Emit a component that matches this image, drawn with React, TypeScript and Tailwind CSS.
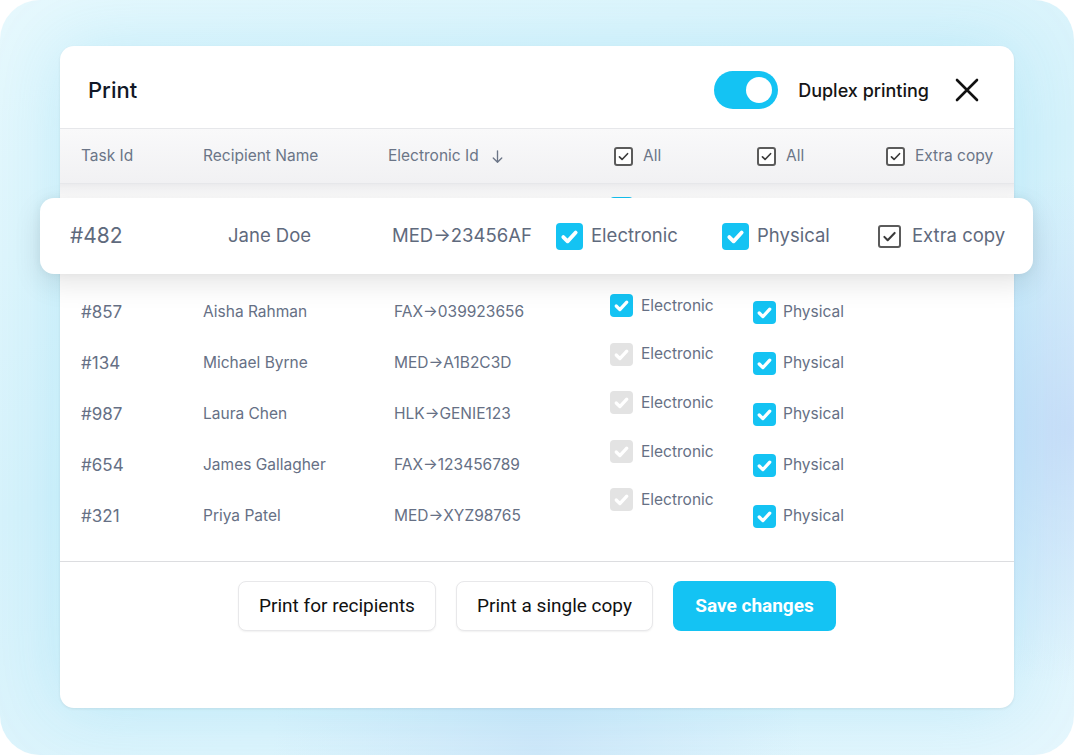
import React from "react";

type Row = { id: string; name: string; eid: string; electronic: "on" | "off" };

const rows: Row[] = [
  { id: "#219", name: "Tom Walsh", eid: "MED→77812BC", electronic: "on" },
  { id: "#482", name: "Jane Doe", eid: "MED→23456AF", electronic: "on" },
  { id: "#857", name: "Aisha Rahman", eid: "FAX→039923656", electronic: "on" },
  { id: "#134", name: "Michael Byrne", eid: "MED→A1B2C3D", electronic: "off" },
  { id: "#987", name: "Laura Chen", eid: "HLK→GENIE123", electronic: "off" },
  { id: "#654", name: "James Gallagher", eid: "FAX→123456789", electronic: "off" },
  { id: "#321", name: "Priya Patel", eid: "MED→XYZ98765", electronic: "off" },
];

const Check = ({ stroke, width = 3.4 }: { stroke: string; width?: number }) => (
  <svg viewBox="0 0 24 24" className="h-full w-full" fill="none">
    <path d="M6.5 12.5l3.8 3.8L17.5 8.5" stroke={stroke} strokeWidth={width} strokeLinecap="round" strokeLinejoin="round" />
  </svg>
);

const FilledBox = ({ size = "h-[23px] w-[23px]" }: { size?: string }) => (
  <span className={`${size} flex shrink-0 items-center justify-center rounded-[4px] bg-[#14c3f3]`}>
    <Check stroke="#ffffff" />
  </span>
);

const DisabledBox = () => (
  <span className="flex h-[23px] w-[23px] shrink-0 items-center justify-center rounded-[4px] bg-[#e3e3e3]">
    <Check stroke="#ffffff" />
  </span>
);

const OutlineBox = ({ size = "h-[19px] w-[19px]" }: { size?: string }) => (
  <span className={`${size} flex shrink-0 items-center justify-center rounded-[3px] border-2 border-[#5b5b5b] bg-white`}>
    <svg viewBox="0 0 24 24" className="h-full w-full" fill="none">
      <path d="M5.5 12.5l4.2 4.2L18.5 7.5" stroke="#3a3a3a" strokeWidth="2.6" strokeLinecap="round" strokeLinejoin="round" />
    </svg>
  </span>
);

const App = () => {
  return (
    <div className="h-[755px] w-[1074px] bg-white font-['Inter','Noto_Sans',sans-serif]">
      <div className="h-[755px] w-[1074px] rounded-[40px] bg-[radial-gradient(circle_at_100%_57%,#c8def8_0%,rgba(200,222,248,0)_22%),radial-gradient(ellipse_at_50%_100%,#d0e8f9_0%,rgba(208,232,249,0)_35%),linear-gradient(160deg,#e6f8fd_0%,#d6f2fb_45%,#e4f6fd_100%)] px-[60px] pt-[46px]">
        <div className="relative flex h-[662px] flex-col rounded-[14px] bg-white shadow-[0_0_70px_rgba(40,190,235,0.18),0_1px_3px_rgba(0,0,0,0.08)]">
          {/* Header */}
          <div className="flex h-[82px] items-center pl-[28px] pr-[35px] pt-[6px]">
            <h1 className="text-[22px] font-medium text-[#111827]">Print</h1>
            <div className="ml-auto flex h-[38px] w-[64px] items-center justify-end rounded-full bg-[#14c3f3] pr-[6px]">
              <span className="h-[26px] w-[26px] rounded-full bg-white" />
            </div>
            <span className="ml-[20px] text-[18px] font-medium text-[#151515]">Duplex printing</span>
            <svg viewBox="0 0 24 24" className="ml-[26px] h-[24px] w-[24px]" fill="none">
              <path d="M2 2L22 22M22 2L2 22" stroke="#111" strokeWidth="2.6" strokeLinecap="round" />
            </svg>
          </div>

          {/* Table header */}
          <div className="flex h-[56px] items-center border-y border-[#e6e7ea] bg-[linear-gradient(180deg,#f9f9fa,#f1f1f3)] pl-[21px] text-[15.5px] text-[#6b7587]">
            <div className="w-[122px]">Task Id</div>
            <div className="w-[185px]">Recipient Name</div>
            <div className="flex w-[226px] items-center gap-[10px]">
              Electronic Id
              <svg viewBox="0 0 24 24" className="h-[17px] w-[17px]" fill="none">
                <path d="M12 4v16M6 14l6 6 6-6" stroke="#6b7587" strokeWidth="1.9" strokeLinecap="round" strokeLinejoin="round" />
              </svg>
            </div>
            <div className="flex w-[143px] items-center gap-[10px]">
              <OutlineBox />
              All
            </div>
            <div className="flex w-[129px] items-center gap-[10px]">
              <OutlineBox />
              All
            </div>
            <div className="flex items-center gap-[10px]">
              <OutlineBox />
              Extra copy
            </div>
          </div>

          {/* Body */}
          <div className="flex h-[377px] bg-[linear-gradient(180deg,#ececee_0px,#ffffff_14px)] pb-[20px] pl-[21px] text-[15.5px] text-[#667085]">
            <div className="w-[122px]">
              {rows.map((r) => (
                <div key={r.id} className="flex h-[51px] items-center pt-[2px] text-[17px]">{r.id}</div>
              ))}
            </div>
            <div className="w-[191px]">
              {rows.map((r) => (
                <div key={r.id} className="flex h-[51px] items-center pt-[1px]">{r.name}</div>
              ))}
            </div>
            <div className="w-[216px]">
              {rows.map((r) => (
                <div key={r.id} className="flex h-[51px] items-center pt-[1px]">{r.eid}</div>
              ))}
            </div>
            <div className="w-[143px]">
              {rows.map((r) => (
                <div key={r.id} className="flex h-[48.6px] items-center gap-[8px]">
                  {r.electronic === "on" ? <FilledBox /> : <DisabledBox />}
                  Electronic
                </div>
              ))}
            </div>
            <div>
              {rows.map((r) => (
                <div key={r.id} className="flex h-[51px] items-center gap-[7px] pt-[1px]">
                  <FilledBox />
                  Physical
                </div>
              ))}
            </div>
          </div>

          {/* Footer */}
          <div className="flex flex-1 justify-center gap-[20px] border-t border-[#dcdde0] pt-[19px] font-['Roboto',sans-serif] text-[19px]">
            <button className="h-[50px] w-[198px] rounded-[8px] border border-[#e8e8ea] bg-white text-[#111] shadow-[0_1px_2px_rgba(0,0,0,0.06)]">
              Print for recipients
            </button>
            <button className="h-[50px] w-[197px] rounded-[8px] border border-[#e8e8ea] bg-white text-[#111] shadow-[0_1px_2px_rgba(0,0,0,0.06)]">
              Print a single copy
            </button>
            <button className="h-[50px] w-[163px] rounded-[8px] bg-[#14c3f3] font-bold text-white">
              Save changes
            </button>
          </div>

          {/* Floating highlighted row */}
          <div className="absolute left-[-20px] top-[152px] flex h-[76px] w-[993px] items-center rounded-[14px] bg-white pl-[30px] text-[18.5px] text-[#5f6a7d] shadow-[0_10px_28px_rgba(0,0,0,0.10),0_0_10px_rgba(0,0,0,0.05)]">
            <div className="w-[158px] text-[21px]">#482</div>
            <div className="w-[164px]">Jane Doe</div>
            <div className="w-[164px]">MED→23456AF</div>
            <div className="flex w-[166px] items-center gap-[8px]">
              <FilledBox size="h-[27px] w-[27px]" />
              Electronic
            </div>
            <div className="flex w-[156px] items-center gap-[8px]">
              <FilledBox size="h-[27px] w-[27px]" />
              Physical
            </div>
            <div className="flex items-center gap-[11px]">
              <OutlineBox size="h-[23px] w-[23px]" />
              Extra copy
            </div>
          </div>
        </div>
      </div>
    </div>
  );
};

export default App;
